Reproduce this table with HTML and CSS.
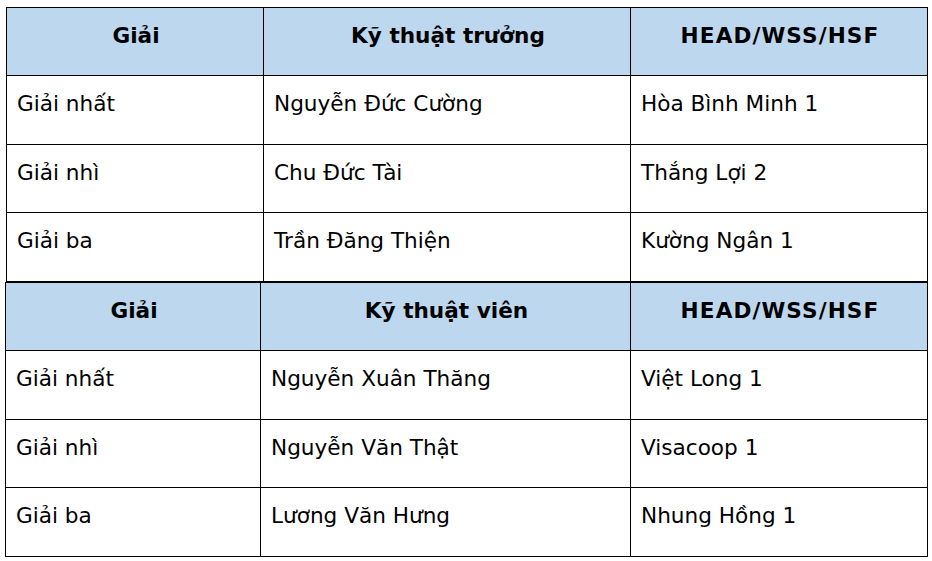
FILE: index.html
```html
<!DOCTYPE html>
<html lang="vi">
<head>
<meta charset="utf-8">
<link rel="stylesheet" href="styles.css">
</head>
<body>
<div class="page">
  <table class="awards awards-first">
    <colgroup><col class="c1a"><col class="c2a"><col class="c3"></colgroup>
    <thead>
      <tr><th>Giải</th><th>Kỹ thuật trưởng</th><th class="caps">HEAD/WSS/HSF</th></tr>
    </thead>
    <tbody>
      <tr class="r1"><td>Giải nhất</td><td>Nguyễn Đức Cường</td><td>Hòa Bình Minh 1</td></tr>
      <tr class="r2"><td>Giải nhì</td><td>Chu Đức Tài</td><td>Thắng Lợi 2</td></tr>
      <tr class="r3"><td>Giải ba</td><td>Trần Đăng Thiện</td><td>Kường Ngân 1</td></tr>
    </tbody>
  </table>
  <table class="awards awards-second">
    <colgroup><col class="c1b"><col class="c2b"><col class="c3"></colgroup>
    <thead>
      <tr><th>Giải</th><th>Kỹ thuật viên</th><th class="caps">HEAD/WSS/HSF</th></tr>
    </thead>
    <tbody>
      <tr class="r1"><td>Giải nhất</td><td>Nguyễn Xuân Thăng</td><td>Việt Long 1</td></tr>
      <tr class="r2"><td>Giải nhì</td><td>Nguyễn Văn Thật</td><td>Visacoop 1</td></tr>
      <tr class="r3"><td>Giải ba</td><td>Lương Văn Hưng</td><td>Nhung Hồng 1</td></tr>
    </tbody>
  </table>
</div>
</body>
</html>
```
FILE: styles.css
```css
html, body {
  margin: 0;
  padding: 0;
  background: #ffffff;
}
.page {
  padding-top: 7px;
  display: flex;
  flex-direction: column;
}
.awards {
  border-collapse: collapse;
  table-layout: fixed;
  font-family: "DejaVu Sans", Verdana, sans-serif;
  font-size: 21.6px;
  color: #000000;
}
.awards-first {
  margin-left: 6px;
  width: 921px;
}
.awards-second {
  margin-left: 5px;
  width: 922px;
}
.c1a { width: 257px; }
.c2a { width: 367px; }
.c1b { width: 255px; }
.c2b { width: 370px; }
.c3 { width: 297px; }
.awards th,
.awards td {
  border: 1px solid #000000;
  vertical-align: top;
  line-height: 24px;
  padding: 16px 8px 0 10px;
  box-sizing: border-box;
  white-space: nowrap;
}
.awards th {
  background: #bdd7ee;
  font-weight: bold;
  text-align: center;
  height: 68px;
}
.awards th.caps {
  letter-spacing: 1.1px;
}
.awards td {
  text-align: left;
  height: 69px;
}
.awards .r2 td {
  height: 68px;
}
```
